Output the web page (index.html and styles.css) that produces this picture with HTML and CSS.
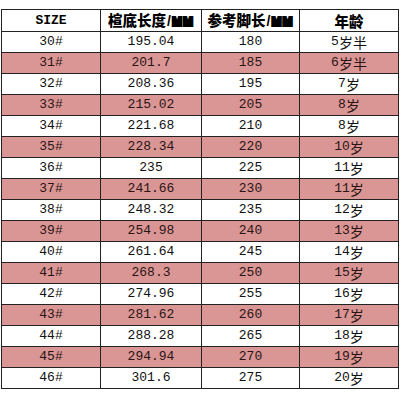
FILE: index.html
```html
<!DOCTYPE html>
<html lang="zh">
<head>
<meta charset="utf-8">
<link rel="stylesheet" href="styles.css">
</head>
<body>
<table class="size-table">
  <colgroup>
    <col class="c1"><col class="c2"><col class="c3"><col class="c4">
  </colgroup>
  <thead>
    <tr>
      <th class="en">SIZE</th>
      <th>楦底长度<span class="slash">/</span><span class="unit">mm</span></th>
      <th>参考脚长<span class="slash">/</span><span class="unit">mm</span></th>
      <th>年龄</th>
    </tr>
  </thead>
  <tbody>
    <tr><td>30#</td><td>195.04</td><td>180</td><td>5<span class="cjk">岁半</span></td></tr>
    <tr class="pink"><td>31#</td><td>201.7</td><td>185</td><td>6<span class="cjk">岁半</span></td></tr>
    <tr><td>32#</td><td>208.36</td><td>195</td><td>7<span class="cjk">岁</span></td></tr>
    <tr class="pink"><td>33#</td><td>215.02</td><td>205</td><td>8<span class="cjk">岁</span></td></tr>
    <tr><td>34#</td><td>221.68</td><td>210</td><td>8<span class="cjk">岁</span></td></tr>
    <tr class="pink"><td>35#</td><td>228.34</td><td>220</td><td>10<span class="cjk">岁</span></td></tr>
    <tr><td>36#</td><td>235</td><td>225</td><td>11<span class="cjk">岁</span></td></tr>
    <tr class="pink"><td>37#</td><td>241.66</td><td>230</td><td>11<span class="cjk">岁</span></td></tr>
    <tr><td>38#</td><td>248.32</td><td>235</td><td>12<span class="cjk">岁</span></td></tr>
    <tr class="pink"><td>39#</td><td>254.98</td><td>240</td><td>13<span class="cjk">岁</span></td></tr>
    <tr><td>40#</td><td>261.64</td><td>245</td><td>14<span class="cjk">岁</span></td></tr>
    <tr class="pink"><td>41#</td><td>268.3</td><td>250</td><td>15<span class="cjk">岁</span></td></tr>
    <tr><td>42#</td><td>274.96</td><td>255</td><td>16<span class="cjk">岁</span></td></tr>
    <tr class="pink"><td>43#</td><td>281.62</td><td>260</td><td>17<span class="cjk">岁</span></td></tr>
    <tr><td>44#</td><td>288.28</td><td>265</td><td>18<span class="cjk">岁</span></td></tr>
    <tr class="pink"><td>45#</td><td>294.94</td><td>270</td><td>19<span class="cjk">岁</span></td></tr>
    <tr><td>46#</td><td>301.6</td><td>275</td><td>20<span class="cjk">岁</span></td></tr>
  </tbody>
</table>
</body>
</html>
```

FILE: styles.css
```css
html, body {
  margin: 0;
  padding: 0;
  background: #fff;
}
body {
  padding: 9px 0 0 1px;
}
.size-table {
  border-collapse: collapse;
  table-layout: fixed;
  width: 398px;
  font-family: "Liberation Mono", "Noto Sans CJK SC", monospace;
  font-size: 13px;
  color: #111;
}
.c1 { width: 99px; }
.c2 { width: 101px; }
.c3 { width: 98px; }
.c4 { width: 99px; }
.size-table th,
.size-table td {
  border: 1px solid #222;
  height: 20px;
  padding: 0;
  text-align: center;
  vertical-align: middle;
  line-height: 20px;
  white-space: nowrap;
}
.size-table td {
  font-weight: normal;
}
.cjk {
  font-family: "Noto Sans CJK SC", sans-serif;
  font-size: 14px;
  font-weight: 400;
  line-height: 20px;
  vertical-align: top;
}
.size-table th {
  font-family: "Noto Sans CJK SC", sans-serif;
  font-weight: 900;
  font-size: 14.5px;
  color: #000;
}
.size-table th.en {
  font-family: "Liberation Mono", monospace;
  font-weight: bold;
  font-size: 13px;
}
.slash {
  font-family: "Liberation Sans", sans-serif;
  font-weight: 900;
  font-size: 14px;
  margin: 0 1px;
}
.unit {
  font-family: "Liberation Sans", sans-serif;
  font-weight: 900;
  font-size: 12px;
  line-height: 12px;
  text-transform: uppercase;
  -webkit-text-stroke: 2.2px #000;
  letter-spacing: 1px;
}
.pink td {
  background: #da9694;
  color: #2a1414;
}
```
